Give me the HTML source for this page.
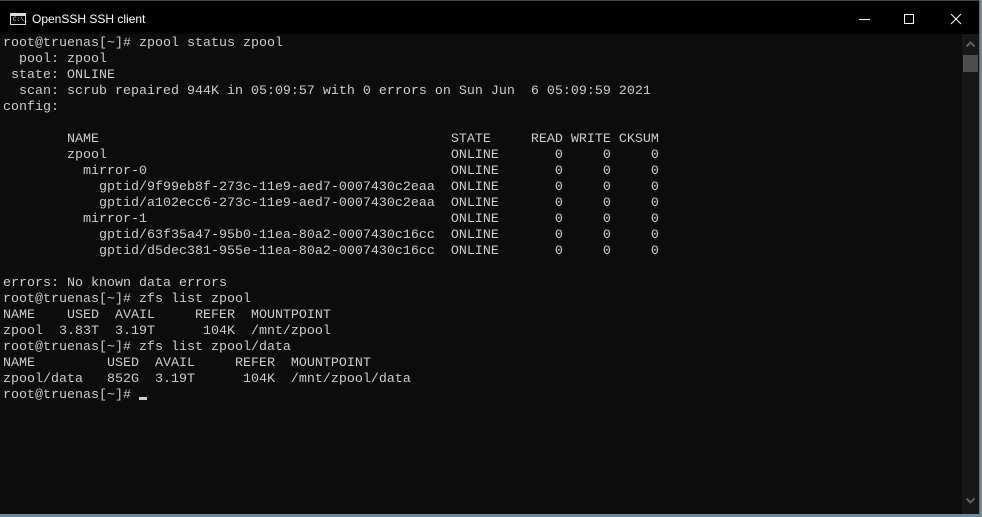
<!DOCTYPE html>
<html><head><style>
html,body{margin:0;padding:0;width:982px;height:517px;overflow:hidden;background:#6f8a9c;}
.win{position:absolute;left:0;top:0;width:979px;height:514px;background:#0c0c0c;border-right:1px solid #5a6a76;}
.title{position:absolute;left:0;top:0;width:979px;height:34px;background:#000;border-top:1px solid #444;box-sizing:border-box;}
.title .t{position:absolute;left:32px;top:11px;color:#fff;font:12px "Liberation Sans",sans-serif;}
.icon{position:absolute;left:10px;top:12px;width:14px;height:10px;border:1px solid #ddd;background:#000;}
.icon:before{content:"";position:absolute;left:0;top:0;width:14px;height:2px;background:#ddd;}
.icon span{position:absolute;left:2px;top:3px;font:6px "Liberation Mono",monospace;color:#ddd;line-height:6px;}
pre{position:absolute;left:3px;top:36px;margin:0;color:#cccccc;font:13.33px/16px "Liberation Mono",monospace;}
.sb{position:absolute;left:962px;top:34px;width:17px;height:480px;background:#171717;}
.thumb{position:absolute;left:1px;top:21px;width:15px;height:17px;background:#4d4d4d;}
.cur{display:inline-block;width:8px;height:3px;background:#ccc;vertical-align:-2px;}
</style></head><body>
<div class="win">
<div class="title"><div class="icon"><span>C:\_</span></div><div class="t">OpenSSH SSH client</div>
<svg style="position:absolute;left:855px;top:11px" width="110" height="14">
<line x1="4" y1="7.5" x2="15" y2="7.5" stroke="#fff" stroke-width="1"/>
<rect x="49.5" y="2.5" width="9" height="9" fill="none" stroke="#fff"/>
<line x1="96" y1="2" x2="106" y2="12" stroke="#fff"/><line x1="106" y1="2" x2="96" y2="12" stroke="#fff"/>
</svg></div>
<pre>root@truenas[~]# zpool status zpool
  pool: zpool
 state: ONLINE
  scan: scrub repaired 944K in 05:09:57 with 0 errors on Sun Jun  6 05:09:59 2021
config:

        NAME                                            STATE     READ WRITE CKSUM
        zpool                                           ONLINE       0     0     0
          mirror-0                                      ONLINE       0     0     0
            gptid/9f99eb8f-273c-11e9-aed7-0007430c2eaa  ONLINE       0     0     0
            gptid/a102ecc6-273c-11e9-aed7-0007430c2eaa  ONLINE       0     0     0
          mirror-1                                      ONLINE       0     0     0
            gptid/63f35a47-95b0-11ea-80a2-0007430c16cc  ONLINE       0     0     0
            gptid/d5dec381-955e-11ea-80a2-0007430c16cc  ONLINE       0     0     0

errors: No known data errors
root@truenas[~]# zfs list zpool
NAME    USED  AVAIL     REFER  MOUNTPOINT
zpool  3.83T  3.19T      104K  /mnt/zpool
root@truenas[~]# zfs list zpool/data
NAME         USED  AVAIL     REFER  MOUNTPOINT
zpool/data   852G  3.19T      104K  /mnt/zpool/data
root@truenas[~]# <span class="cur"></span></pre>
<div class="sb"><div class="thumb"></div>
<svg style="position:absolute;left:4px;top:7px" width="9" height="6"><path d="M0.5 5.5 L4.5 1.5 L8.5 5.5" fill="none" stroke="#606060" stroke-width="2"/></svg>
<svg style="position:absolute;left:4px;top:464px" width="9" height="6"><path d="M0.5 0.5 L4.5 4.5 L8.5 0.5" fill="none" stroke="#606060" stroke-width="2"/></svg>
</div>
</div>
</body></html>
